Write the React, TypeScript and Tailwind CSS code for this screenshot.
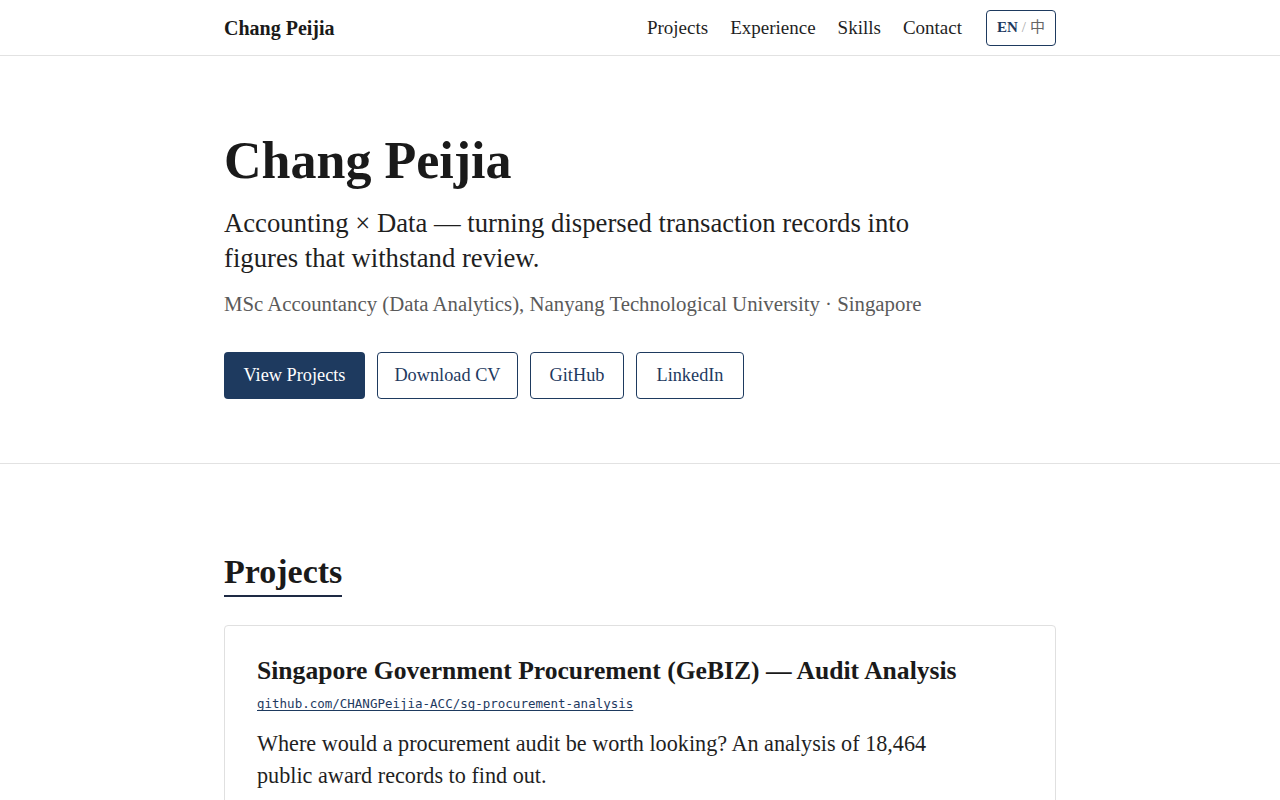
const SERIF = "font-['Liberation_Serif','Noto_Sans_CJK_SC',serif]";

const BUTTONS = [
  { label: "View Projects", width: "w-[141px]", primary: true },
  { label: "Download CV", width: "w-[141px]", primary: false },
  { label: "GitHub", width: "w-[94px]", primary: false },
  { label: "LinkedIn", width: "w-[108px]", primary: false },
];

function Header() {
  return (
    <header className="border-b border-[#e2e2e2] bg-white">
      <div className="mx-auto flex h-[55px] w-[832px] items-center justify-between">
        <a className="pt-px text-[20px] font-bold text-[#1a1a1a]">Chang Peijia</a>
        <nav className="flex items-center">
          <div className="flex items-center gap-[22px] pt-px text-[19px] text-[#1f1f1f]">
            <a>Projects</a>
            <a>Experience</a>
            <a>Skills</a>
            <a>Contact</a>
          </div>
          <button className="ml-6 flex h-9 w-[70px] items-center justify-center gap-1 rounded border border-[#1e3a5f] text-[15px]">
            <span className="font-bold text-[#1e3a5f]">EN</span>
            <span className="text-[#aaaaaa]">/</span>
            <span className="text-[#666666]">中</span>
          </button>
        </nav>
      </div>
    </header>
  );
}

function Hero() {
  return (
    <section className="border-b border-[#e2e2e2]">
      <div className="mx-auto w-[832px] pt-[74px] pb-16">
        <h1 className="text-[52px] leading-[1.2] font-bold text-[#1a1a1a]">Chang Peijia</h1>
        <p className="mt-[14px] max-w-[720px] text-[26.7px] leading-[35px] text-[#1f1f1f]">
          Accounting × Data — turning dispersed transaction records into figures that withstand review.
        </p>
        <p className="mt-[13px] text-[20.8px] leading-[30px] text-[#5a5a5a]">
          MSc Accountancy (Data Analytics), Nanyang Technological University · Singapore
        </p>
        <div className="mt-[33px] flex gap-3 text-[18.3px]">
          {BUTTONS.map((b) => (
            <a
              key={b.label}
              className={`flex h-[47px] items-center justify-center rounded ${b.width} ${
                b.primary
                  ? "bg-[#1e3a5f] text-white"
                  : "border border-[#1e3a5f] text-[#1e3a5f]"
              }`}
            >
              {b.label}
            </a>
          ))}
        </div>
      </div>
    </section>
  );
}

function Projects() {
  return (
    <section className="mx-auto w-[832px] pt-[88px]">
      <h2 className="inline-block border-b-2 border-[#1e2a44] pb-[2px] text-[34px] leading-[1.2] font-bold text-[#1a1a1a]">
        Projects
      </h2>
      <div className="mt-7 rounded border border-[#e0e0e0] px-8 pt-7 pb-8">
        <h3 className="text-[25.6px] leading-[1.3] font-bold text-[#1a1a1a]">
          Singapore Government Procurement (GeBIZ) — Audit Analysis
        </h3>
        <a className="mt-[8px] inline-block font-['DejaVu_Sans_Mono',monospace] text-[12.5px] text-[#1e3a5f] underline underline-offset-2">
          github.com/CHANGPeijia-ACC/sg-procurement-analysis
        </a>
        <p className="mt-[13px] max-w-[700px] text-[22.2px] leading-[32px] text-[#1f1f1f]">
          Where would a procurement audit be worth looking? An analysis of 18,464 public award records to find out.
        </p>
      </div>
    </section>
  );
}

export default function App() {
  return (
    <div className={`${SERIF} min-h-screen bg-white`}>
      <Header />
      <Hero />
      <Projects />
    </div>
  );
}
